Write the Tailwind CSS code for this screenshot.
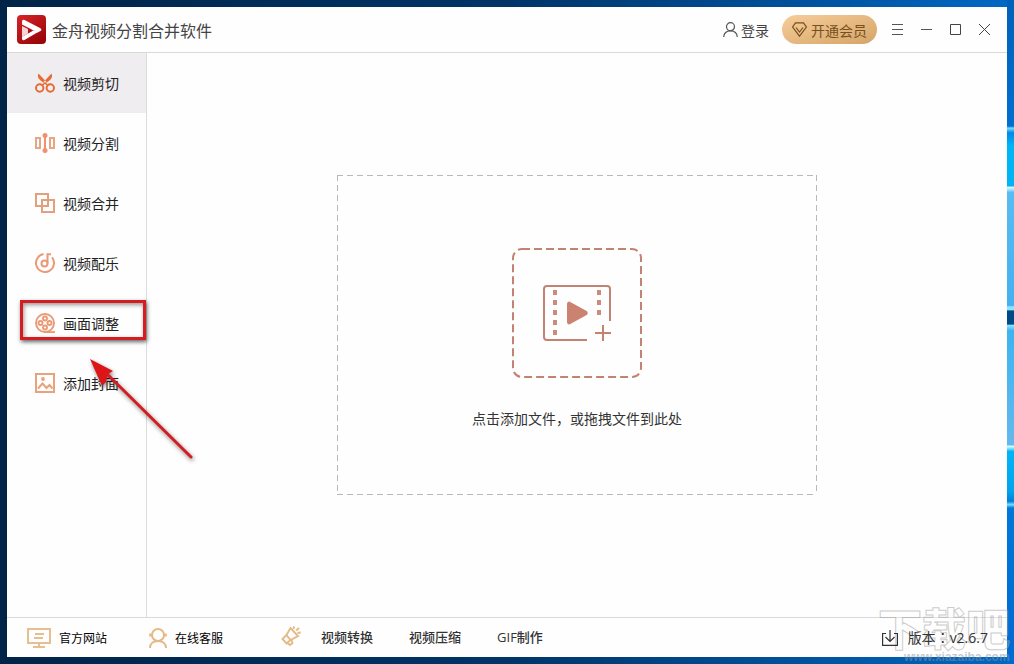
<!DOCTYPE html>
<html lang="zh-CN">
<head>
<meta charset="utf-8">
<title>金舟视频分割合并软件</title>
<script src="https://cdn.jsdelivr.net/npm/@tailwindcss/browser@4"></script>
</head>
<body class="relative flex min-h-screen overflow-hidden bg-linear-to-r from-[#002447] via-[#003468] to-[#0068c4] font-['Noto_Sans_CJK_SC',sans-serif] text-[#222]">
<div class="flex min-w-0 flex-1 flex-col py-[7px] pl-[7px]">
  <div class="flex flex-1 flex-col bg-[#fefefe]">
    <header class="flex h-[46px] shrink-0 items-center border-b border-[#d9d9d9] pr-4 pl-[10px]">
      <svg class="mr-[6px] size-[29px]" viewBox="0 0 29 29">
        <defs><linearGradient id="logo" x1="0" y1="0" x2="0.7" y2="1"><stop offset="0" stop-color="#d8242a"/><stop offset="1" stop-color="#990608"/></linearGradient></defs>
        <rect width="29" height="29" rx="4" fill="url(#logo)"/>
        <path d="M5 6.500Q5 4 7.500 5L23 13Q25.500 14.500 23.500 16L20.500 17.500L5 9.500Z" fill="#fff"/>
        <path d="M5 11L11 14V18.500L5 22Z" fill="#f6d3d4"/>
        <path d="M5 22L16 15.500L21.500 16.800L7.500 25Q5 26 5 23.500Z" fill="#fff"/>
        <path d="M5 22L11 18.500V14L15.500 15.800Z" fill="#b01014"/>
      </svg>
      <h1 class="text-base leading-5 text-[#444]">金舟视频分割合并软件</h1>
      <button class="ml-auto flex items-center gap-[3px] text-sm leading-4 text-[#444]">
        <svg class="size-[15px]" viewBox="0 0 15 15" fill="none" stroke="#555" stroke-width="1.200"><circle cx="7.500" cy="4.700" r="4"/><path d="M.7 15C1 11 3.500 8.900 7.500 8.900S14 11 14.300 15"/></svg>登录
      </button>
      <button class="ml-[13px] flex h-[29px] items-center gap-1 rounded-full bg-linear-to-br from-[#f8cd9b] to-[#d4a567] px-[10px] text-sm leading-4 text-[#76501f]">
        <svg class="size-[15px]" viewBox="0 0 15 15" fill="none" stroke="#76501f" stroke-width="1.200"><path d="M3.500.8h8L14.400 5 7.500 14.200.6 5Z"/><path d="M4 5.500L7.500 10 11 5.500"/></svg>开通会员
      </button>
      <div class="ml-[15px] flex gap-[17px]">
        <button aria-label="菜单"><svg class="size-3" viewBox="0 0 12 12" stroke="#555"><path d="M0 .5h11M0 5.500h11M0 10.500h11"/></svg></button>
        <button aria-label="最小化"><svg class="size-3" viewBox="0 0 12 12" stroke="#555"><path d="M0 5.500h11"/></svg></button>
        <button aria-label="最大化"><svg class="size-3" viewBox="0 0 12 12" stroke="#444" fill="none"><path d="M.5.5h10v10H.5Z"/></svg></button>
        <button aria-label="关闭"><svg class="size-3" viewBox="0 0 12 12" stroke="#444"><path d="M0 0l11 11M11 0L0 11"/></svg></button>
      </div>
    </header>
    <div class="flex flex-1">
      <nav class="flex w-[140px] shrink-0 flex-col border-r border-[#dcdcdc] text-sm">
        <button class="flex h-[60px] items-center gap-2 bg-[#efedf0] pl-7">
          <svg class="size-5" viewBox="0 0 20 20" fill="none" stroke="#e66c36" stroke-width="2"><circle cx="4.700" cy="15" r="3.700"/><circle cx="15.300" cy="15" r="3.700"/><path d="M3.500 .5C2.300 3 3 5 5 7L10 11L11.500 9ZM16.500.5C17.700 3 17 5 15 7L10 11L8.500 9Z" fill="#e66c36" stroke="none"/><path d="M7 12.500L10 10L13 12.500" stroke-width="1.500"/></svg>视频剪切
        </button>
        <button class="flex h-[60px] items-center gap-2 pl-7">
          <svg class="size-5" viewBox="0 0 20 20" fill="none" stroke="#e6a583" stroke-width="2"><path d="M1 5H5v10H1ZM15 5h4v10H15Z"/><path d="M10 2v16" stroke="#f09070"/><circle cx="10" cy="2.500" r="2.500" fill="#f09070" stroke="none"/><circle cx="10" cy="17.500" r="2.500" fill="#f09070" stroke="none"/></svg>视频分割
        </button>
        <button class="flex h-[60px] items-center gap-2 pl-7">
          <svg class="size-5" viewBox="0 0 20 20" fill="none" stroke="#e2a07d" stroke-width="2"><path d="M1 1h12v12H1ZM7 7h12v12H7Z"/></svg>视频合并
        </button>
        <button class="flex h-[60px] items-center gap-2 pl-7">
          <svg class="size-5" viewBox="0 0 20 20" fill="none" stroke="#e99b78" stroke-width="2"><path d="M8.500 1.100A9 9 0 1 0 17 4.300"/><circle cx="9.500" cy="10.500" r="3"/><path d="M12.500 10.500V1.200H16"/></svg>视频配乐
        </button>
        <button class="flex h-[60px] items-center gap-2 pl-7">
          <svg class="size-5" viewBox="0 0 20 20" fill="none" stroke="#ec9a76" stroke-width="1.900"><circle cx="10" cy="10" r="9"/><circle cx="10" cy="5.500" r="2"/><circle cx="5.500" cy="10" r="2"/><circle cx="14.500" cy="10" r="2"/><circle cx="10" cy="14.500" r="2"/><path d="M9 19.100h11"/></svg>画面调整
        </button>
        <button class="flex h-[60px] items-center gap-2 pl-7">
          <svg class="size-5" viewBox="0 0 20 20" fill="none" stroke="#e8a27c" stroke-width="2"><path d="M1 1h18v18H1Z"/><path d="M3 15.500L7.500 10.500L11.500 15L14.500 12L17.500 15.500"/><circle cx="8" cy="6" r="1.900" fill="#e8a27c" stroke="none"/></svg>添加封面
        </button>
      </nav>
      <main class="flex flex-1 items-center justify-center">
        <button class="relative flex h-80 w-[480px] flex-col items-center justify-center gap-[30px] pt-[6px] text-sm text-[#333]">
          <svg class="absolute inset-0 size-full" fill="none" stroke="#b8b8b8" stroke-dasharray="6 4"><path d="M0 .5H480M.5 0V320M479.500 0V320M0 319.500H480"/></svg>
          <svg class="size-[130px]" viewBox="0 0 130 130" fill="none" stroke="#c48371" stroke-width="2">
            <rect x="1" y="1" width="128" height="128" rx="9" stroke-dasharray="8 4"/>
            <path d="M75 92H35Q32 92 32 89V41Q32 38 35 38H95Q98 38 98 41V73M83 85H99M91 77V93"/>
            <g fill="#cb8d7b" stroke="none"><path d="M41 42h4v5h-4ZM41 52h4v5h-4ZM41 62h4v5h-4ZM41 72h4v5h-4ZM41 82h4v5h-4ZM85 42h4v5h-4ZM85 52h4v5h-4ZM85 62h4v5h-4Z"/></g>
            <path d="M56.500 56Q56.500 54.500 58 55.500L73.500 64Q75 65 73.500 66L58 74.500Q56.500 75.500 56.500 74Z" fill="#cb8270" stroke-width="3" stroke="#cb8270" stroke-linejoin="round"/>
          </svg>
          <span class="leading-5">点击添加文件，或拖拽文件到此处</span>
        </button>
      </main>
    </div>
    <footer class="flex h-10 shrink-0 items-center border-t border-[#d9d9d9] pr-[19px] pl-5 text-xs text-black">
      <a href="#" class="flex items-center gap-2">
        <svg class="h-5 w-6" viewBox="0 0 24 20" fill="none" stroke="#e5bf8f" stroke-width="2"><path d="M1 1h22v14H1ZM8 6h9M7 10h9M12 15v4M6 19h12"/></svg>官方网站
      </a>
      <a href="#" class="ml-[42px] flex items-center gap-2">
        <svg class="h-5 w-[18px]" viewBox="0 0 18 20" fill="none" stroke="#e5b985" stroke-width="2"><circle cx="9" cy="7" r="6"/><path d="M1 20C1 15.500 4.500 13 9 13S17 15.500 17 20"/><path d="M1.500 5.500v3M16.500 5.500v3" stroke-width="2.500"/></svg>在线客服
      </a>
      <svg class="mt-[-4px] ml-[58px] size-5" viewBox="0 0 20 20" fill="none" stroke="#e5b985" stroke-width="1.900"><path d="M5.500 9L9.500 2L17 10L9.500 14ZM5.500 9L1.500 13L5.500 17.500L9.500 14M6.500 17L9 19L11.500 17L10.500 14M12.500 3L13 .3M15.300 4.500L18 1.800M16.500 7L19.700 6.500"/></svg>
      <div class="ml-5 flex gap-9 text-[13px] font-medium text-[#333]">
        <a href="#">视频转换</a><a href="#">视频压缩</a><a href="#"><span class="font-['Open_Sans',sans-serif] font-normal">GIF</span>制作</a>
      </div>
      <div class="relative z-10 ml-auto flex items-center gap-[10px] text-sm text-[#333]">
        <svg class="size-4" viewBox="0 0 16 16" fill="none" stroke="#333" stroke-width="1.200"><path d="M4 3.500H.6V15.400H15.400V3.500H12M8 0V11M3.500 7L8 11.500L12.500 7"/></svg>
        <span>版本<span class="font-['Noto_Sans_CJK_TC',sans-serif]" lang="zh-TW">：</span><span class="font-['Open_Sans',sans-serif]">v2.6.7</span></span>
      </div>
    </footer>
  </div>
</div>
<div class="w-[7px] shrink-0 bg-[linear-gradient(#0061b8_0%,#006fd0_19%,#7adcff_19.3%,#0088e8_20%,#00b5f5_22%,#00b4f4_28%,#e0ffff_28.2%,#58bcf2_29%,#44b0ee_46%,#8ce4ff_46.2%,#8ce4ff_46.7%,#004a8a_46.8%,#004a8a_48.8%,#8ce4ff_49%,#3cb4f0_49.800%,#64b8ec_67%,#e0ffff_67.2%,#00b4f8_68%,#00a4ec_74%,#0080dc_75.500%,#7adcff_76%,#0078d8_76.500%,#006ad0_100%)]"></div>

<!-- Annotation: highlight frame and arrow -->
<div class="pointer-events-none absolute top-[300px] left-5 h-10 w-[126px] border-[3px] border-[#d31d20] shadow-[1px_2px_4px_rgba(0,0,0,0.6),inset_1px_2px_4px_rgba(0,0,0,0.4)]"></div>
<svg class="pointer-events-none absolute top-[350px] left-20 h-[120px] w-[125px] drop-shadow-[1px_2px_2px_rgba(0,0,0,0.5)]" viewBox="0 0 125 120"><path d="M26 23L111 107" stroke="#d31d20" stroke-width="3" stroke-linecap="round"/><path d="M10 9L33 21L28 24L26 32L22 36Z" fill="#dc1517"/></svg>

<!-- Site watermark -->
<div class="pointer-events-none absolute right-0 bottom-0" aria-hidden="true">
  <svg class="h-16 w-[138px]" viewBox="0 0 138 64"><text x="2" y="46" font-size="44" font-weight="900" font-family="Noto Sans CJK SC" fill="#fff" fill-opacity=".2" stroke="#999" stroke-opacity=".5">下载吧</text><text x="28" y="61" font-size="12" font-weight="700" font-family="Liberation Sans" fill="#8a94a0" fill-opacity=".5">www.xiazaiba.com</text></svg>
</div>
</body>
</html>
